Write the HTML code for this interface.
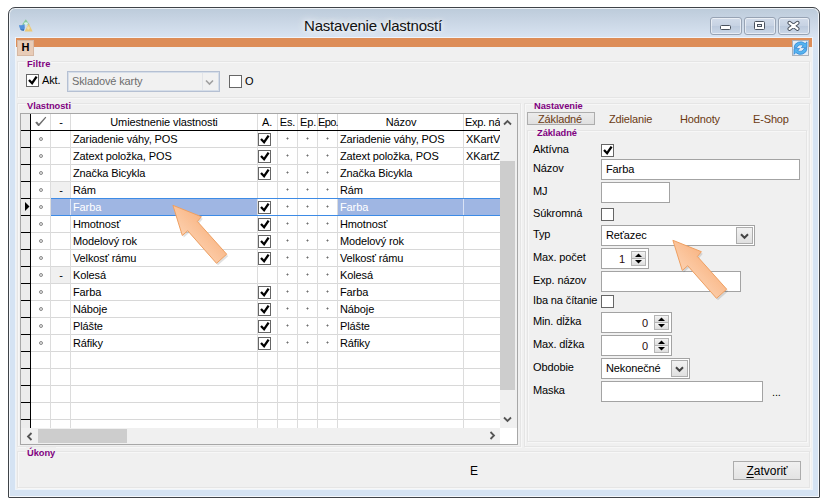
<!DOCTYPE html>
<html><head><meta charset="utf-8"><title>Nastavenie vlastností</title>
<style>
html,body{margin:0;padding:0;background:#fff;}
body{width:825px;height:501px;position:relative;overflow:hidden;font-family:"Liberation Sans",sans-serif;font-size:11px;color:#000;}
.abs{position:absolute;}
.win{position:absolute;left:8px;top:7px;width:812px;height:491px;box-sizing:border-box;border:1px solid #3f4348;border-radius:7px 7px 1px 1px;background:linear-gradient(180deg,#bccbda 0px,#c6d3e2 10px,#d9e4f2 30px,#d5e3f3 60px,#d5e3f3 100%);box-shadow:inset 0 0 0 1px rgba(255,255,255,.75);}
.title{position:absolute;left:1px;top:16px;width:744px;text-align:center;font-size:15px;line-height:20px;color:#111;letter-spacing:-.22px;text-shadow:0 0 5px #fff,0 0 9px rgba(255,255,255,.9),0 0 14px rgba(255,255,255,.7);}
.client{position:absolute;left:16px;top:38px;width:796px;height:451px;background:#f0f0f0;box-shadow:0 0 0 1px rgba(255,255,255,.6);}
.obar{position:absolute;left:16px;top:38px;width:796px;height:9px;background:#dd8d58;}
.hbtn{position:absolute;left:17px;top:40px;width:17px;height:16px;background:#e8ccb7;border:1px solid #d6b8a3;box-sizing:border-box;font-weight:bold;font-size:11px;line-height:13px;text-align:center;}
.gb{position:absolute;border:1px solid #e5e5e5;box-sizing:border-box;box-shadow:inset 1px 1px 0 #f7f7f7, 1px 1px 0 #f7f7f7;}
.gl{position:absolute;font-weight:bold;font-size:9.3px;letter-spacing:-.05px;line-height:12px;color:#800080;white-space:nowrap;background:#f0f0f0;padding:0 1px;}
.grid{position:absolute;box-sizing:border-box;border:1px solid #a7a7a7;background:#fff;}
.gt{position:absolute;letter-spacing:-.12px;font-size:11px;line-height:16px;white-space:nowrap;height:16px;}
.gt.hc{text-align:center;}
.gt.sel{color:#fff;}
.dot{position:absolute;width:4px;height:4px;border-radius:50%;border:1px solid #8a8a8a;box-sizing:border-box;background:#e8e8e8;}
.pl{position:absolute;width:1px;height:1px;background:#707070;box-shadow:-1px 0 0 #b4b4b4,1px 0 0 #b4b4b4,0 -1px 0 #b4b4b4,0 1px 0 #b4b4b4;}
.ck{display:block;width:13px;height:13px;}
.lb{position:absolute;letter-spacing:-.12px;font-size:11px;line-height:14px;white-space:nowrap;}
.inp{position:absolute;box-sizing:border-box;border:1px solid #a3a3a3;background:#fff;font-size:11px;line-height:19px;padding:0 4px;letter-spacing:-.12px;white-space:nowrap;}
.cbtn{position:absolute;width:17px;height:17px;box-sizing:border-box;border:1px solid #acacac;background:linear-gradient(#f2f2f2,#e0e0e0);}
.sbtn{position:absolute;width:15px;height:8px;box-sizing:border-box;border:1px solid #b5b5b5;background:linear-gradient(#f4f4f4,#dddddd);}
.tab{position:absolute;top:112px;letter-spacing:-.15px;font-size:11px;line-height:14px;color:#6b3a12;white-space:nowrap;}
.wb{position:absolute;top:17px;height:18px;box-sizing:border-box;border:1px solid #97a3b4;border-radius:3px;background:linear-gradient(#d2dcea,#c6d2e3 50%,#bccadd 51%,#cbd7e7);box-shadow:inset 0 0 0 1px rgba(255,255,255,.55);}
.btn{position:absolute;box-sizing:border-box;border:1px solid #acacac;background:linear-gradient(#f0f0f0,#e3e3e3);font-size:12px;text-align:center;}
</style></head><body>
<div class="win"></div>
<svg class="abs" style="left:17px;top:15px;overflow:visible" width="18" height="18" viewBox="-1 -1 18 18"><defs><filter id="ib" x="-30%" y="-30%" width="160%" height="160%"><feGaussianBlur stdDeviation=".55"/></filter></defs><g filter="url(#ib)" opacity=".85"><path d="M7.8 3.2 L11.6 8.8 L4 8.8 Z" fill="#7cc98d"/><path d="M1 9 Q4 10 6.5 8 Q7.5 12 5.8 14.6 Q1.5 14.8 1 9Z" fill="#3e86d8"/><path d="M2 12.5 Q4 14 6.3 13 L5.8 14.8 Q2.5 15 2 12.5Z" fill="#1d5aa6"/><path d="M10.8 7.6 L14.6 15.4 L6.6 15.4 Z" fill="#efc665"/><ellipse cx="8" cy="7.6" rx="1.9" ry="1.3" fill="#dff8ee"/><ellipse cx="10.4" cy="12" rx="1.3" ry="1.8" fill="#f9e3a4"/></g></svg>
<div class="title">Nastavenie vlastností</div>
<div class="wb" style="left:710px;width:32px"></div>
<div class="wb" style="left:744px;width:32px"></div>
<div class="wb" style="left:778px;width:32px"></div>
<svg class="abs" style="left:720px;top:25px" width="11" height="5" viewBox="0 0 11 5"><rect x=".5" y=".5" width="10" height="4" rx="1" fill="#fff" stroke="#4a525e"/></svg>
<svg class="abs" style="left:754px;top:21px" width="11" height="9" viewBox="0 0 11 9"><rect x=".5" y=".5" width="10" height="8" rx="1" fill="#fff" stroke="#4a525e"/><rect x="3.5" y="3.5" width="4" height="2" fill="#e8edf3" stroke="#4a525e"/></svg>
<svg class="abs" style="left:787px;top:20px" width="13" height="11" viewBox="0 0 13 11"><path d="M2.5 2.8 L10.5 8.8 M10.5 2.8 L2.5 8.8" stroke="#4a525e" stroke-width="4" stroke-linecap="round"/><path d="M2.5 2.8 L10.5 8.8 M10.5 2.8 L2.5 8.8" stroke="#fff" stroke-width="2.2" stroke-linecap="round"/></svg>
<div class="client"></div>
<div class="obar"></div>
<div class="hbtn">H</div>
<svg class="abs" style="left:792px;top:40px" width="17" height="16" viewBox="0 0 17 16"><rect x=".5" y=".5" width="16" height="15" fill="#e6edf5" stroke="#a9b1bb"/><g fill="#55b4f0" stroke="#2a7fd0" stroke-width=".7" stroke-linejoin="round"><path d="M2 7.6 A6.6 6.2 0 0 1 13.2 3.6 L15 1.8 L15 7.6 L9.4 7.6 L11.2 5.7 A3.8 3.6 0 0 0 5 7.6 Z"/><path d="M15 8.6 A6.6 6.2 0 0 1 3.8 12.6 L2 14.4 L2 8.6 L7.6 8.6 L5.8 10.5 A3.8 3.6 0 0 0 12 8.6 Z"/></g></svg>

<div class="gb" style="left:17px;top:61px;width:793px;height:37px"></div>
<div class="gl" style="left:26px;top:58px;letter-spacing:.12px">Filtre</div>
<div class="abs" style="left:26px;top:74px;width:13px;height:13px"><svg class="ck" viewBox="0 0 13 13"><rect x=".5" y=".5" width="12" height="12" fill="#fff" stroke="#666"/><path d="M3 6 L6.1 9.2 L10.6 2.7" fill="none" stroke="#000" stroke-width="2.3"/></svg></div>
<div class="lb" style="left:42px;top:73px">Akt.</div>
<div class="inp" style="left:67px;top:71px;width:153px;height:21px;background:#f1f1f1;border-color:#b5c0d3;box-shadow:inset 0 0 0 1px #d6dee9;color:#6d6d6d;padding-left:4px">Skladové karty</div>
<div class="abs" style="left:202px;top:73px;width:1px;height:17px;background:#e2e4e8"></div>
<svg class="abs" style="left:205px;top:79px" width="9" height="7" viewBox="0 0 9 7"><path d="M1 1.5 L4.5 5 L8 1.5" fill="none" stroke="#a0a0a0" stroke-width="1.6"/></svg>
<div class="abs" style="left:229px;top:75px;width:13px;height:13px"><svg class="ck" viewBox="0 0 13 13"><rect x=".5" y=".5" width="12" height="12" fill="#fff" stroke="#666"/></svg></div>
<div class="lb" style="left:245px;top:74px">O</div>

<div class="gb" style="left:17px;top:103px;width:504px;height:344px"></div>
<div class="gl" style="left:26px;top:100px">Vlastnosti</div>
<div class="grid" style="left:20px;top:113px;width:498px;height:332px"></div>
<div class="abs" style="left:31px;top:114px;width:469px;height:314px;background:#fff"></div>
<div class="abs" style="left:21px;top:114px;width:9px;height:314px;background:#ececec"></div>
<div class="abs" style="left:30px;top:114px;width:1px;height:314px;background:#000"></div>
<div class="abs" style="left:31px;top:147px;width:469px;height:1px;background:#d8d8d8"></div>
<div class="abs" style="left:21px;top:147px;width:9px;height:1px;background:#000"></div>
<div class="abs" style="left:31px;top:164px;width:469px;height:1px;background:#d8d8d8"></div>
<div class="abs" style="left:21px;top:164px;width:9px;height:1px;background:#000"></div>
<div class="abs" style="left:31px;top:181px;width:469px;height:1px;background:#d8d8d8"></div>
<div class="abs" style="left:21px;top:181px;width:9px;height:1px;background:#000"></div>
<div class="abs" style="left:31px;top:198px;width:469px;height:1px;background:#d8d8d8"></div>
<div class="abs" style="left:21px;top:198px;width:9px;height:1px;background:#000"></div>
<div class="abs" style="left:31px;top:215px;width:469px;height:1px;background:#d8d8d8"></div>
<div class="abs" style="left:21px;top:215px;width:9px;height:1px;background:#000"></div>
<div class="abs" style="left:31px;top:232px;width:469px;height:1px;background:#d8d8d8"></div>
<div class="abs" style="left:21px;top:232px;width:9px;height:1px;background:#000"></div>
<div class="abs" style="left:31px;top:249px;width:469px;height:1px;background:#d8d8d8"></div>
<div class="abs" style="left:21px;top:249px;width:9px;height:1px;background:#000"></div>
<div class="abs" style="left:31px;top:266px;width:469px;height:1px;background:#d8d8d8"></div>
<div class="abs" style="left:21px;top:266px;width:9px;height:1px;background:#000"></div>
<div class="abs" style="left:31px;top:283px;width:469px;height:1px;background:#d8d8d8"></div>
<div class="abs" style="left:21px;top:283px;width:9px;height:1px;background:#000"></div>
<div class="abs" style="left:31px;top:300px;width:469px;height:1px;background:#d8d8d8"></div>
<div class="abs" style="left:21px;top:300px;width:9px;height:1px;background:#000"></div>
<div class="abs" style="left:31px;top:317px;width:469px;height:1px;background:#d8d8d8"></div>
<div class="abs" style="left:21px;top:317px;width:9px;height:1px;background:#000"></div>
<div class="abs" style="left:31px;top:334px;width:469px;height:1px;background:#d8d8d8"></div>
<div class="abs" style="left:21px;top:334px;width:9px;height:1px;background:#000"></div>
<div class="abs" style="left:31px;top:351px;width:469px;height:1px;background:#d8d8d8"></div>
<div class="abs" style="left:21px;top:351px;width:9px;height:1px;background:#000"></div>
<div class="abs" style="left:31px;top:368px;width:469px;height:1px;background:#d8d8d8"></div>
<div class="abs" style="left:21px;top:368px;width:9px;height:1px;background:#000"></div>
<div class="abs" style="left:31px;top:385px;width:469px;height:1px;background:#d8d8d8"></div>
<div class="abs" style="left:21px;top:385px;width:9px;height:1px;background:#000"></div>
<div class="abs" style="left:31px;top:402px;width:469px;height:1px;background:#d8d8d8"></div>
<div class="abs" style="left:21px;top:402px;width:9px;height:1px;background:#000"></div>
<div class="abs" style="left:31px;top:419px;width:469px;height:1px;background:#d8d8d8"></div>
<div class="abs" style="left:21px;top:419px;width:9px;height:1px;background:#000"></div>
<div class="abs" style="left:50px;top:114px;width:1px;height:314px;background:#dcdcdc"></div>
<div class="abs" style="left:70px;top:114px;width:1px;height:314px;background:#dcdcdc"></div>
<div class="abs" style="left:257px;top:114px;width:1px;height:314px;background:#dcdcdc"></div>
<div class="abs" style="left:277px;top:114px;width:1px;height:314px;background:#dcdcdc"></div>
<div class="abs" style="left:297px;top:114px;width:1px;height:314px;background:#dcdcdc"></div>
<div class="abs" style="left:317px;top:114px;width:1px;height:314px;background:#dcdcdc"></div>
<div class="abs" style="left:337px;top:114px;width:1px;height:314px;background:#dcdcdc"></div>
<div class="abs" style="left:463px;top:114px;width:1px;height:314px;background:#dcdcdc"></div>
<div class="abs" style="left:500px;top:114px;width:1px;height:314px;background:#dcdcdc"></div>
<div class="abs" style="left:21px;top:130px;width:479px;height:1px;background:#000"></div>
<div class="abs" style="left:51px;top:198px;width:449px;height:18px;background:#9fb6e3;border-top:1px solid #3d8be6;border-bottom:1px solid #3d8be6;box-sizing:border-box"></div>
<div class="abs" style="left:257px;top:199px;width:81px;height:16px;background:#fff"></div>
<div class="abs" style="left:70px;top:199px;width:1px;height:16px;background:#d9e2f5"></div>
<div class="abs" style="left:257px;top:199px;width:1px;height:16px;background:#dcdcdc"></div>
<div class="abs" style="left:277px;top:199px;width:1px;height:16px;background:#dcdcdc"></div>
<div class="abs" style="left:297px;top:199px;width:1px;height:16px;background:#dcdcdc"></div>
<div class="abs" style="left:317px;top:199px;width:1px;height:16px;background:#dcdcdc"></div>
<div class="abs" style="left:337px;top:199px;width:1px;height:16px;background:#dcdcdc"></div>
<div class="abs" style="left:463px;top:199px;width:1px;height:16px;background:#d9e2f5"></div>
<div class="gt hc" style="left:51px;top:114px;width:20px">-</div>
<div class="gt hc" style="left:71px;top:114px;width:186px">Umiestnenie vlastnosti</div>
<div class="gt hc" style="left:257px;top:114px;width:20px">A.</div>
<div class="gt hc" style="left:277px;top:114px;width:21px">Es.</div>
<div class="gt hc" style="left:298px;top:114px;width:20px">Ep.</div>
<div class="gt hc" style="left:318px;top:114px;width:20px;letter-spacing:-.7px">Epo.</div>
<div class="gt hc" style="left:338px;top:114px;width:126px">Názov</div>
<div class="gt" style="left:465px;top:114px;width:35px;overflow:hidden;white-space:nowrap;letter-spacing:-.3px">Exp. ná</div>
<svg class="abs" style="left:34px;top:116px" width="14" height="12" viewBox="0 0 14 12"><path d="M1.2 6.6 L3 5.5 L4.9 7.8 L11.4 0.8 L12.3 1.4 L5.1 10.1 L4.1 10.1 Z" fill="#6e6e6e"/></svg>
<div class="dot" style="left:39px;top:137px"></div>
<div class="gt" style="left:73px;top:131px">Zariadenie váhy, POS</div>
<div class="abs" style="left:258px;top:133px;width:13px;height:13px"><svg class="ck" viewBox="0 0 13 13"><rect x=".5" y=".5" width="12" height="12" fill="#fff" stroke="#666"/><path d="M3 6 L6.1 9.2 L10.6 2.7" fill="none" stroke="#000" stroke-width="2.3"/></svg></div>
<div class="pl" style="left:287px;top:138px"></div>
<div class="pl" style="left:307px;top:138px"></div>
<div class="pl" style="left:327px;top:138px"></div>
<div class="gt" style="left:340px;top:131px">Zariadenie váhy, POS</div>
<div class="gt" style="left:466px;top:131px;width:34px;overflow:hidden">XKartV</div>
<div class="dot" style="left:39px;top:154px"></div>
<div class="gt" style="left:73px;top:148px">Zatext položka, POS</div>
<div class="abs" style="left:258px;top:150px;width:13px;height:13px"><svg class="ck" viewBox="0 0 13 13"><rect x=".5" y=".5" width="12" height="12" fill="#fff" stroke="#666"/><path d="M3 6 L6.1 9.2 L10.6 2.7" fill="none" stroke="#000" stroke-width="2.3"/></svg></div>
<div class="pl" style="left:287px;top:155px"></div>
<div class="pl" style="left:307px;top:155px"></div>
<div class="pl" style="left:327px;top:155px"></div>
<div class="gt" style="left:340px;top:148px">Zatext položka, POS</div>
<div class="gt" style="left:466px;top:148px;width:34px;overflow:hidden">XKartZ</div>
<div class="dot" style="left:39px;top:171px"></div>
<div class="gt" style="left:73px;top:165px">Značka Bicykla</div>
<div class="abs" style="left:258px;top:167px;width:13px;height:13px"><svg class="ck" viewBox="0 0 13 13"><rect x=".5" y=".5" width="12" height="12" fill="#fff" stroke="#666"/><path d="M3 6 L6.1 9.2 L10.6 2.7" fill="none" stroke="#000" stroke-width="2.3"/></svg></div>
<div class="pl" style="left:287px;top:172px"></div>
<div class="pl" style="left:307px;top:172px"></div>
<div class="pl" style="left:327px;top:172px"></div>
<div class="gt" style="left:340px;top:165px">Značka Bicykla</div>
<div class="dot" style="left:39px;top:188px"></div>
<div class="gt hc" style="left:51px;top:182px;width:20px">-</div>
<div class="abs" style="left:51px;top:182px;width:19px;height:16px;background:#f0f0f0"></div>
<div class="gt hc" style="left:51px;top:182px;width:20px">-</div>
<div class="gt" style="left:73px;top:182px">Rám</div>
<div class="pl" style="left:287px;top:189px"></div>
<div class="pl" style="left:307px;top:189px"></div>
<div class="pl" style="left:327px;top:189px"></div>
<div class="gt" style="left:340px;top:182px">Rám</div>
<div class="dot" style="left:39px;top:205px"></div>
<div class="gt sel" style="left:73px;top:199px">Farba</div>
<div class="abs" style="left:258px;top:201px;width:13px;height:13px"><svg class="ck" viewBox="0 0 13 13"><rect x=".5" y=".5" width="12" height="12" fill="#fff" stroke="#666"/><path d="M3 6 L6.1 9.2 L10.6 2.7" fill="none" stroke="#000" stroke-width="2.3"/></svg></div>
<div class="pl" style="left:287px;top:206px"></div>
<div class="pl" style="left:307px;top:206px"></div>
<div class="pl" style="left:327px;top:206px"></div>
<div class="gt sel" style="left:340px;top:199px">Farba</div>
<div class="dot" style="left:39px;top:222px"></div>
<div class="gt" style="left:73px;top:216px">Hmotnosť</div>
<div class="abs" style="left:258px;top:218px;width:13px;height:13px"><svg class="ck" viewBox="0 0 13 13"><rect x=".5" y=".5" width="12" height="12" fill="#fff" stroke="#666"/><path d="M3 6 L6.1 9.2 L10.6 2.7" fill="none" stroke="#000" stroke-width="2.3"/></svg></div>
<div class="pl" style="left:287px;top:223px"></div>
<div class="pl" style="left:307px;top:223px"></div>
<div class="pl" style="left:327px;top:223px"></div>
<div class="gt" style="left:340px;top:216px">Hmotnosť</div>
<div class="dot" style="left:39px;top:239px"></div>
<div class="gt" style="left:73px;top:233px">Modelový rok</div>
<div class="abs" style="left:258px;top:235px;width:13px;height:13px"><svg class="ck" viewBox="0 0 13 13"><rect x=".5" y=".5" width="12" height="12" fill="#fff" stroke="#666"/><path d="M3 6 L6.1 9.2 L10.6 2.7" fill="none" stroke="#000" stroke-width="2.3"/></svg></div>
<div class="pl" style="left:287px;top:240px"></div>
<div class="pl" style="left:307px;top:240px"></div>
<div class="pl" style="left:327px;top:240px"></div>
<div class="gt" style="left:340px;top:233px">Modelový rok</div>
<div class="dot" style="left:39px;top:256px"></div>
<div class="gt" style="left:73px;top:250px">Velkosť rámu</div>
<div class="abs" style="left:258px;top:252px;width:13px;height:13px"><svg class="ck" viewBox="0 0 13 13"><rect x=".5" y=".5" width="12" height="12" fill="#fff" stroke="#666"/><path d="M3 6 L6.1 9.2 L10.6 2.7" fill="none" stroke="#000" stroke-width="2.3"/></svg></div>
<div class="pl" style="left:287px;top:257px"></div>
<div class="pl" style="left:307px;top:257px"></div>
<div class="pl" style="left:327px;top:257px"></div>
<div class="gt" style="left:340px;top:250px">Velkosť rámu</div>
<div class="dot" style="left:39px;top:273px"></div>
<div class="gt hc" style="left:51px;top:267px;width:20px">-</div>
<div class="abs" style="left:51px;top:267px;width:19px;height:16px;background:#f0f0f0"></div>
<div class="gt hc" style="left:51px;top:267px;width:20px">-</div>
<div class="gt" style="left:73px;top:267px">Kolesá</div>
<div class="pl" style="left:287px;top:274px"></div>
<div class="pl" style="left:307px;top:274px"></div>
<div class="pl" style="left:327px;top:274px"></div>
<div class="gt" style="left:340px;top:267px">Kolesá</div>
<div class="dot" style="left:39px;top:290px"></div>
<div class="gt" style="left:73px;top:284px">Farba</div>
<div class="abs" style="left:258px;top:286px;width:13px;height:13px"><svg class="ck" viewBox="0 0 13 13"><rect x=".5" y=".5" width="12" height="12" fill="#fff" stroke="#666"/><path d="M3 6 L6.1 9.2 L10.6 2.7" fill="none" stroke="#000" stroke-width="2.3"/></svg></div>
<div class="pl" style="left:287px;top:291px"></div>
<div class="pl" style="left:307px;top:291px"></div>
<div class="pl" style="left:327px;top:291px"></div>
<div class="gt" style="left:340px;top:284px">Farba</div>
<div class="dot" style="left:39px;top:307px"></div>
<div class="gt" style="left:73px;top:301px">Náboje</div>
<div class="abs" style="left:258px;top:303px;width:13px;height:13px"><svg class="ck" viewBox="0 0 13 13"><rect x=".5" y=".5" width="12" height="12" fill="#fff" stroke="#666"/><path d="M3 6 L6.1 9.2 L10.6 2.7" fill="none" stroke="#000" stroke-width="2.3"/></svg></div>
<div class="pl" style="left:287px;top:308px"></div>
<div class="pl" style="left:307px;top:308px"></div>
<div class="pl" style="left:327px;top:308px"></div>
<div class="gt" style="left:340px;top:301px">Náboje</div>
<div class="dot" style="left:39px;top:324px"></div>
<div class="gt" style="left:73px;top:318px">Plášte</div>
<div class="abs" style="left:258px;top:320px;width:13px;height:13px"><svg class="ck" viewBox="0 0 13 13"><rect x=".5" y=".5" width="12" height="12" fill="#fff" stroke="#666"/><path d="M3 6 L6.1 9.2 L10.6 2.7" fill="none" stroke="#000" stroke-width="2.3"/></svg></div>
<div class="pl" style="left:287px;top:325px"></div>
<div class="pl" style="left:307px;top:325px"></div>
<div class="pl" style="left:327px;top:325px"></div>
<div class="gt" style="left:340px;top:318px">Plášte</div>
<div class="dot" style="left:39px;top:341px"></div>
<div class="gt" style="left:73px;top:335px">Ráfiky</div>
<div class="abs" style="left:258px;top:337px;width:13px;height:13px"><svg class="ck" viewBox="0 0 13 13"><rect x=".5" y=".5" width="12" height="12" fill="#fff" stroke="#666"/><path d="M3 6 L6.1 9.2 L10.6 2.7" fill="none" stroke="#000" stroke-width="2.3"/></svg></div>
<div class="pl" style="left:287px;top:342px"></div>
<div class="pl" style="left:307px;top:342px"></div>
<div class="pl" style="left:327px;top:342px"></div>
<div class="gt" style="left:340px;top:335px">Ráfiky</div>
<svg class="abs" style="left:25px;top:202px" width="5" height="9" viewBox="0 0 5 9"><path d="M0 0 L4.5 4.5 L0 9 Z" fill="#000"/></svg>
<div class="abs" style="left:500px;top:114px;width:17px;height:314px;background:#f0f0f0"></div>
<div class="abs" style="left:500px;top:161px;width:15px;height:229px;background:#cdcdcd"></div>
<svg class="abs" style="left:503px;top:119px" width="9" height="7" viewBox="0 0 9 7"><path d="M1 5.5 L4.5 2 L8 5.5" fill="none" stroke="#555" stroke-width="1.8"/></svg>
<svg class="abs" style="left:503px;top:416px" width="9" height="7" viewBox="0 0 9 7"><path d="M1 1.5 L4.5 5 L8 1.5" fill="none" stroke="#555" stroke-width="1.8"/></svg>
<div class="abs" style="left:21px;top:428px;width:479px;height:16px;background:#f0f0f0"></div>
<div class="abs" style="left:38px;top:429px;width:89px;height:14px;background:#cdcdcd"></div>
<div class="abs" style="left:500px;top:428px;width:17px;height:16px;background:#fff"></div>
<svg class="abs" style="left:26px;top:432px" width="7" height="9" viewBox="0 0 7 9"><path d="M5.5 1 L2 4.5 L5.5 8" fill="none" stroke="#555" stroke-width="1.8"/></svg>
<svg class="abs" style="left:489px;top:431px" width="7" height="9" viewBox="0 0 7 9"><path d="M1.5 1 L5 4.5 L1.5 8" fill="none" stroke="#555" stroke-width="1.8"/></svg>

<div class="gb" style="left:524px;top:103px;width:286px;height:344px"></div>
<div class="gl" style="left:533px;top:100px">Nastavenie</div>
<div class="btn" style="left:527px;top:112px;width:68px;height:13px;border-color:#adadad;background:linear-gradient(#ececec,#e0e0e0)"></div>
<div class="tab" style="left:538px">Základné</div>
<div class="tab" style="left:609px">Zdielanie</div>
<div class="tab" style="left:680px">Hodnoty</div>
<div class="tab" style="left:753px">E-Shop</div>
<div class="gb" style="left:527px;top:130px;width:280px;height:312px"></div>
<div class="gl" style="left:536px;top:127px">Základné</div>
<div class="lb" style="left:533px;top:142px">Aktívna</div>
<div class="lb" style="left:533px;top:161px">Názov</div>
<div class="lb" style="left:533px;top:184px">MJ</div>
<div class="lb" style="left:533px;top:206px">Súkromná</div>
<div class="lb" style="left:533px;top:227px">Typ</div>
<div class="lb" style="left:533px;top:250px">Max. počet</div>
<div class="lb" style="left:533px;top:273px">Exp. názov</div>
<div class="lb" style="left:533px;top:293px">Iba na čítanie</div>
<div class="lb" style="left:533px;top:314px">Min. dĺžka</div>
<div class="lb" style="left:533px;top:337px">Max. dĺžka</div>
<div class="lb" style="left:533px;top:360px">Obdobie</div>
<div class="lb" style="left:533px;top:383px">Maska</div>
<div class="abs" style="left:601px;top:144px;width:13px;height:13px"><svg class="ck" viewBox="0 0 13 13"><rect x=".5" y=".5" width="12" height="12" fill="#fff" stroke="#666"/><path d="M3 6 L6.1 9.2 L10.6 2.7" fill="none" stroke="#000" stroke-width="2.3"/></svg></div>
<div class="inp" style="left:601px;top:159px;width:199px;height:21px;text-align:left"><span>Farba</span></div>
<div class="inp" style="left:601px;top:182px;width:69px;height:21px;text-align:left"><span></span></div>
<div class="abs" style="left:601px;top:208px;width:13px;height:13px"><svg class="ck" viewBox="0 0 13 13"><rect x=".5" y=".5" width="12" height="12" fill="#fff" stroke="#666"/></svg></div>
<div class="inp" style="left:601px;top:225px;width:154px;height:21px;text-align:left"><span>Reťazec</span></div>
<div class="cbtn" style="left:736px;top:227px"></div><svg class="abs" style="left:740px;top:233px" width="9" height="7" viewBox="0 0 9 7"><path d="M1 1.2 L4.5 4.8 L8 1.2" fill="none" stroke="#444" stroke-width="2"/></svg>
<div class="inp" style="left:601px;top:248px;width:48px;height:21px;text-align:left"><span></span></div>
<div class="lb" style="left:601px;top:252px;width:24px;text-align:right;color:#2a0a10">1</div>
<div class="sbtn" style="left:631px;top:251px"></div><div class="sbtn" style="left:631px;top:258px"></div>
<svg class="abs" style="left:635px;top:253px" width="7" height="4" viewBox="0 0 7 4"><path d="M0 4 L3.5 0.5 L7 4Z" fill="#000"/></svg>
<svg class="abs" style="left:635px;top:260px" width="7" height="4" viewBox="0 0 7 4"><path d="M0 0 L3.5 3.5 L7 0Z" fill="#000"/></svg>
<div class="inp" style="left:601px;top:271px;width:140px;height:21px;text-align:left"><span></span></div>
<div class="abs" style="left:601px;top:295px;width:13px;height:13px"><svg class="ck" viewBox="0 0 13 13"><rect x=".5" y=".5" width="12" height="12" fill="#fff" stroke="#666"/></svg></div>
<div class="inp" style="left:601px;top:312px;width:71px;height:21px;text-align:left"><span></span></div>
<div class="lb" style="left:601px;top:316px;width:47px;text-align:right;color:#2a0a10">0</div>
<div class="sbtn" style="left:654px;top:315px"></div><div class="sbtn" style="left:654px;top:322px"></div>
<svg class="abs" style="left:658px;top:317px" width="7" height="4" viewBox="0 0 7 4"><path d="M0 4 L3.5 0.5 L7 4Z" fill="#000"/></svg>
<svg class="abs" style="left:658px;top:324px" width="7" height="4" viewBox="0 0 7 4"><path d="M0 0 L3.5 3.5 L7 0Z" fill="#000"/></svg>
<div class="inp" style="left:601px;top:335px;width:71px;height:21px;text-align:left"><span></span></div>
<div class="lb" style="left:601px;top:339px;width:47px;text-align:right;color:#2a0a10">0</div>
<div class="sbtn" style="left:654px;top:338px"></div><div class="sbtn" style="left:654px;top:345px"></div>
<svg class="abs" style="left:658px;top:340px" width="7" height="4" viewBox="0 0 7 4"><path d="M0 4 L3.5 0.5 L7 4Z" fill="#000"/></svg>
<svg class="abs" style="left:658px;top:347px" width="7" height="4" viewBox="0 0 7 4"><path d="M0 0 L3.5 3.5 L7 0Z" fill="#000"/></svg>
<div class="inp" style="left:601px;top:358px;width:89px;height:21px;text-align:left"><span>Nekonečné</span></div>
<div class="cbtn" style="left:671px;top:360px"></div><svg class="abs" style="left:675px;top:366px" width="9" height="7" viewBox="0 0 9 7"><path d="M1 1.2 L4.5 4.8 L8 1.2" fill="none" stroke="#444" stroke-width="2"/></svg>
<div class="inp" style="left:601px;top:381px;width:162px;height:21px;text-align:left"><span></span></div>
<div class="lb" style="left:772px;top:385px">...</div>

<div class="gb" style="left:17px;top:451px;width:793px;height:37px"></div>
<div class="gl" style="left:26px;top:447px">Úkony</div>
<div class="lb" style="left:470px;top:464px;font-size:12px">E</div>
<div class="btn" style="left:733px;top:461px;width:68px;height:19px;line-height:19px"><u style="text-underline-offset:1.5px">Z</u>atvoriť</div>

<svg class="abs" style="left:170px;top:203px;overflow:visible" width="70" height="70" viewBox="0 0 70 70">
<defs><linearGradient id="ag1" x1="0" y1="1" x2="1" y2="0"><stop offset=".25" stop-color="#fdd5b6"/><stop offset=".75" stop-color="#f8b07c"/></linearGradient></defs>
<path d="M2.9 2.3 L31.4 13.7 L27.4 18.5 L56.7 51.2 L46.5 60.3 L17.7 27.7 L12.3 32.5 Z" fill="#000" opacity=".12" transform="translate(1.5,2)"/>
<path d="M2.9 2.3 L31.4 13.7 L27.4 18.5 L56.7 51.2 L46.5 60.3 L17.7 27.7 L12.3 32.5 Z" fill="url(#ag1)" stroke="#efa062" stroke-width="1" stroke-linejoin="round"/></svg>
<svg class="abs" style="left:670px;top:237.7px;overflow:visible" width="70" height="70" viewBox="0 0 70 70">
<defs><linearGradient id="ag2" x1="0" y1="1" x2="1" y2="0"><stop offset=".25" stop-color="#fdd5b6"/><stop offset=".75" stop-color="#f8b07c"/></linearGradient></defs>
<path d="M2.9 2.3 L31.4 13.7 L27.4 18.5 L56.7 51.2 L46.5 60.3 L17.7 27.7 L12.3 32.5 Z" fill="#000" opacity=".12" transform="translate(1.5,2)"/>
<path d="M2.9 2.3 L31.4 13.7 L27.4 18.5 L56.7 51.2 L46.5 60.3 L17.7 27.7 L12.3 32.5 Z" fill="url(#ag2)" stroke="#efa062" stroke-width="1" stroke-linejoin="round"/></svg>
</body></html>
